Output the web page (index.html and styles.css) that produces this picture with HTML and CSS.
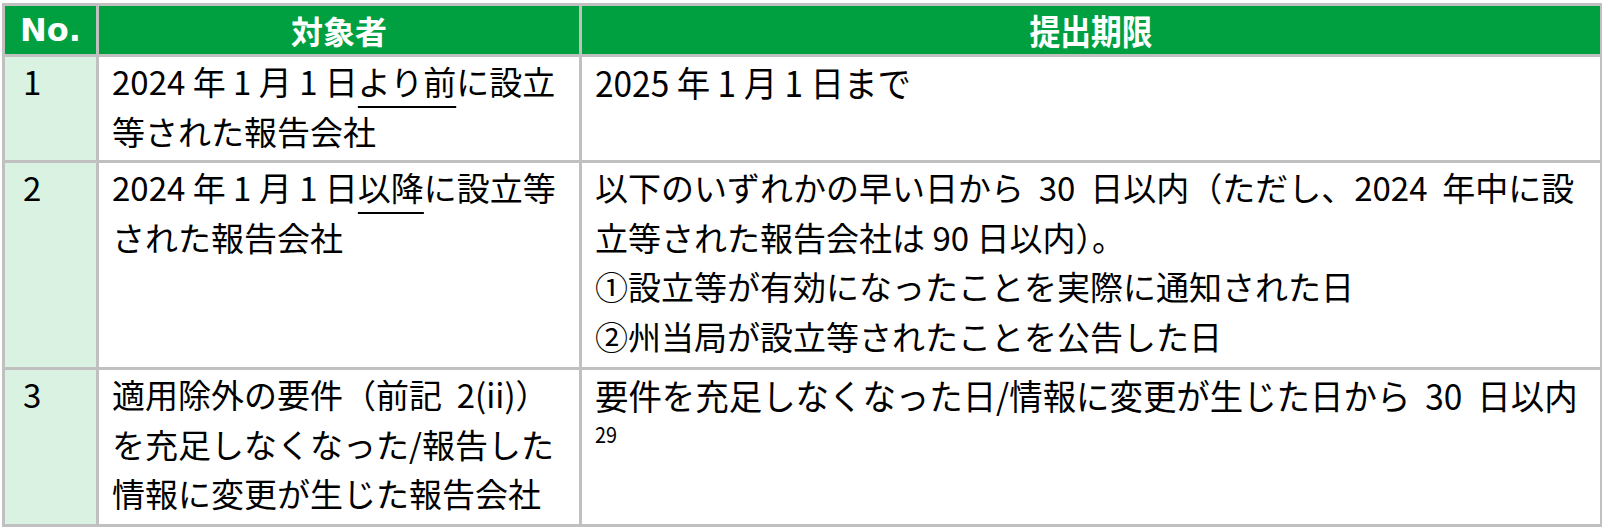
FILE: index.html
```html
<!DOCTYPE html>
<html lang="ja">
<head>
<meta charset="utf-8">
<link rel="stylesheet" href="styles.css">
</head>
<body>
<table class="deadline">
  <colgroup>
    <col class="c-no">
    <col class="c-target">
    <col class="c-limit">
  </colgroup>
  <thead>
    <tr>
      <th class="h-no">No.</th>
      <th>対象者</th>
      <th><span class="narrow-h">提出期限</span></th>
    </tr>
  </thead>
  <tbody>
    <tr class="r1">
      <td class="num">1</td>
      <td>2024 年 1 月 1 日<span class="ul">より前</span>に設立等された報告会社</td>
      <td><span class="cond">2025 年 1 月 1 日まで</span></td>
    </tr>
    <tr class="r2">
      <td class="num">2</td>
      <td>2024 年 1 月 1 日<span class="ul">以降</span>に設立等された報告会社</td>
      <td>以下のいずれかの早い日から &nbsp;30&nbsp; 日以内（ただし、2024 &nbsp;年中に設立等された報告会社は 90 日以内）。<br>①設立等が有効になったことを実際に通知された日<br>②州当局が設立等されたことを公告した日</td>
    </tr>
    <tr class="r3">
      <td class="num">3</td>
      <td>適用除外の要件（前記 &nbsp;2(ii)）<br>を充足しなくなった/報告した情報に変更が生じた報告会社</td>
      <td><span class="cond">要件を充足しなくなった日/情報に変更が生じた日から &nbsp;30&nbsp; 日以内</span><span class="fn">29</span></td>
    </tr>
  </tbody>
</table>
</body>
</html>
```

FILE: styles.css
```css
html, body {
  margin: 0;
  padding: 0;
  background: #ffffff;
}

body {
  padding: 3px 0 0 2px;
  font-family: "Noto Sans CJK JP", "Noto Sans", sans-serif;
  color: #000000;
}

.deadline {
  border-collapse: collapse;
  width: 1598px;
  table-layout: fixed;
}

.c-no { width: 94px; }
.c-target { width: 483px; }
.c-limit { width: 1021px; }

.deadline th,
.deadline td {
  border: 3px solid #c0c0c0;
}

.deadline th {
  background: #00a040;
  color: #ffffff;
  font-weight: 700;
  font-size: 32px;
  height: 48px;
  padding: 0;
  line-height: 46px;
  text-align: center;
}

.h-no {
  font-family: "DejaVu Sans", "Noto Sans", sans-serif;
  font-size: 30px;
}

.narrow-h {
  display: inline-block;
  font-size: 35px;
  transform: scaleX(0.88);
}

.deadline td {
  font-size: 33px;
  line-height: 49.5px;
  vertical-align: top;
  padding: 0 8px 4px 13px;
  word-break: break-all;
  overflow: hidden;
}

.deadline td.num {
  background: #d9f2e1;
  padding-left: 18px;
}

.r1 td { height: 94px; }
.r2 td { height: 200px; }
.r3 td { height: 150px; }

.ul {
  text-decoration: underline;
  text-decoration-thickness: 2px;
  text-underline-offset: 11px;
}

.cond {
  display: inline-block;
  font-size: 35px;
  white-space: nowrap;
  transform: scaleX(0.955);
  transform-origin: left center;
}

.fn {
  display: block;
  font-size: 22px;
  line-height: 22px;
  transform: scaleX(0.9);
  transform-origin: left center;
}
```
